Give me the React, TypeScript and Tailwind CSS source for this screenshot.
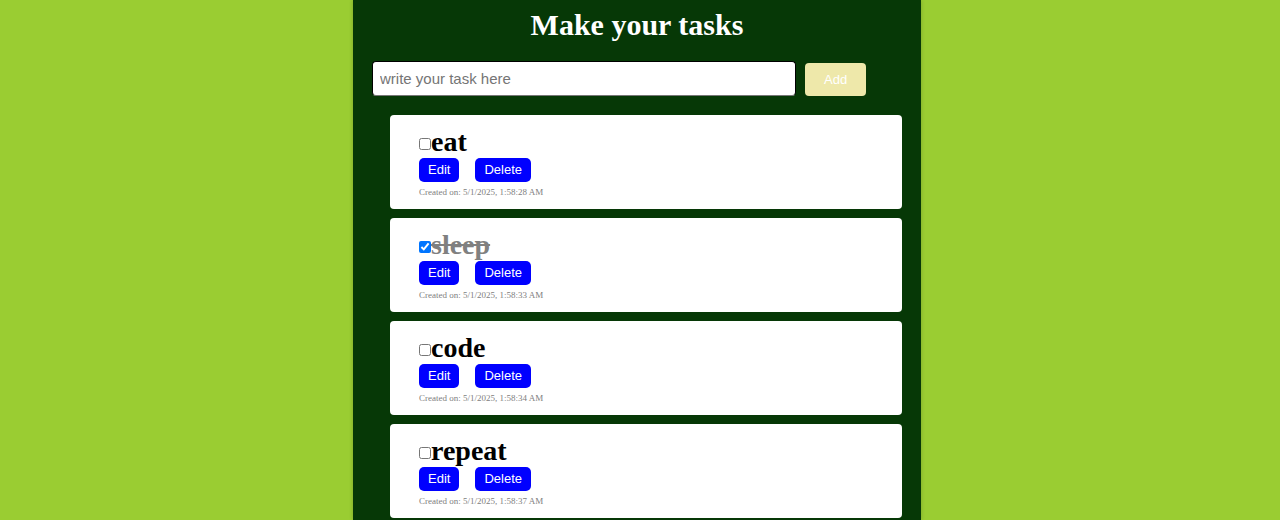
import { useState } from "react";

type Task = { id: number; text: string; done: boolean; created: string };

const initialTasks: Task[] = [
  { id: 1, text: "eat", done: false, created: "5/1/2025, 1:58:28 AM" },
  { id: 2, text: "sleep", done: true, created: "5/1/2025, 1:58:33 AM" },
  { id: 3, text: "code", done: false, created: "5/1/2025, 1:58:34 AM" },
  { id: 4, text: "repeat", done: false, created: "5/1/2025, 1:58:37 AM" },
];

const actionClass =
  "h-6 rounded-[5px] bg-[#0000ff] px-[9px] font-['Liberation_Sans',Arial,sans-serif] text-[13px] leading-6 text-white";

function TaskCard({ task, onToggle, onDelete }: { task: Task; onToggle: () => void; onDelete: () => void }) {
  const inputId = `task-${task.id}`;
  return (
    <li className="rounded-[4px] bg-white px-[29px] pt-[11px] pb-[11px]">
      <div className="flex h-8 items-start">
        <input
          id={inputId}
          type="checkbox"
          checked={task.done}
          onChange={onToggle}
          className="mt-3 size-3 shrink-0"
        />
        <label
          htmlFor={inputId}
          className={
            task.done
              ? "text-[28px] leading-8 font-bold text-[#808080] line-through"
              : "text-[28px] leading-8 font-bold text-black"
          }
        >
          {task.text}
        </label>
      </div>
      <div className="flex gap-4">
        <button type="button" className={actionClass}>Edit</button>
        <button type="button" onClick={onDelete} className={actionClass}>Delete</button>
      </div>
      <p className="mt-1 text-[9px] leading-3 text-[#808080]">Created on: {task.created}</p>
    </li>
  );
}

export default function App() {
  const [tasks, setTasks] = useState(initialTasks);
  const [draft, setDraft] = useState("");

  const addTask = () => {
    if (!draft.trim()) return;
    setTasks([...tasks, { id: Date.now(), text: draft, done: false, created: new Date().toLocaleString("en-US") }]);
    setDraft("");
  };

  return (
    <div className="flex min-h-screen justify-center bg-[#9acd32] pr-[6px] font-['Liberation_Serif','Times_New_Roman',serif]">
      <main className="w-full max-w-[568px] bg-[#063806] px-[19px] pt-2 shadow-[0_0_4px_rgba(0,0,0,0.2)]">
        <h1 className="text-center text-[30px] leading-[34px] font-bold text-white">Make your tasks</h1>
        <form
          className="mt-[19px] flex items-end gap-[9px] font-['Liberation_Sans',Arial,sans-serif]"
          onSubmit={(e) => {
            e.preventDefault();
            addTask();
          }}
        >
          <input
            type="text"
            aria-label="Task"
            placeholder="write your task here"
            value={draft}
            onChange={(e) => setDraft(e.target.value)}
            className="h-[35px] w-4/5 rounded-[4px] border border-black border-b-[#767676] bg-white px-[7px] text-[15px] text-black placeholder:text-[#757575]"
          />
          <button type="submit" className="h-[33px] rounded-[4px] bg-[#eee8aa] px-[19px] text-[13px] text-white">
            Add
          </button>
        </form>
        <ul className="mt-[19px] flex flex-col gap-[9px] pl-[18px]">
          {tasks.map((task) => (
            <TaskCard
              key={task.id}
              task={task}
              onToggle={() => setTasks(tasks.map((t) => (t.id === task.id ? { ...t, done: !t.done } : t)))}
              onDelete={() => setTasks(tasks.filter((t) => t.id !== task.id))}
            />
          ))}
        </ul>
      </main>
    </div>
  );
}
